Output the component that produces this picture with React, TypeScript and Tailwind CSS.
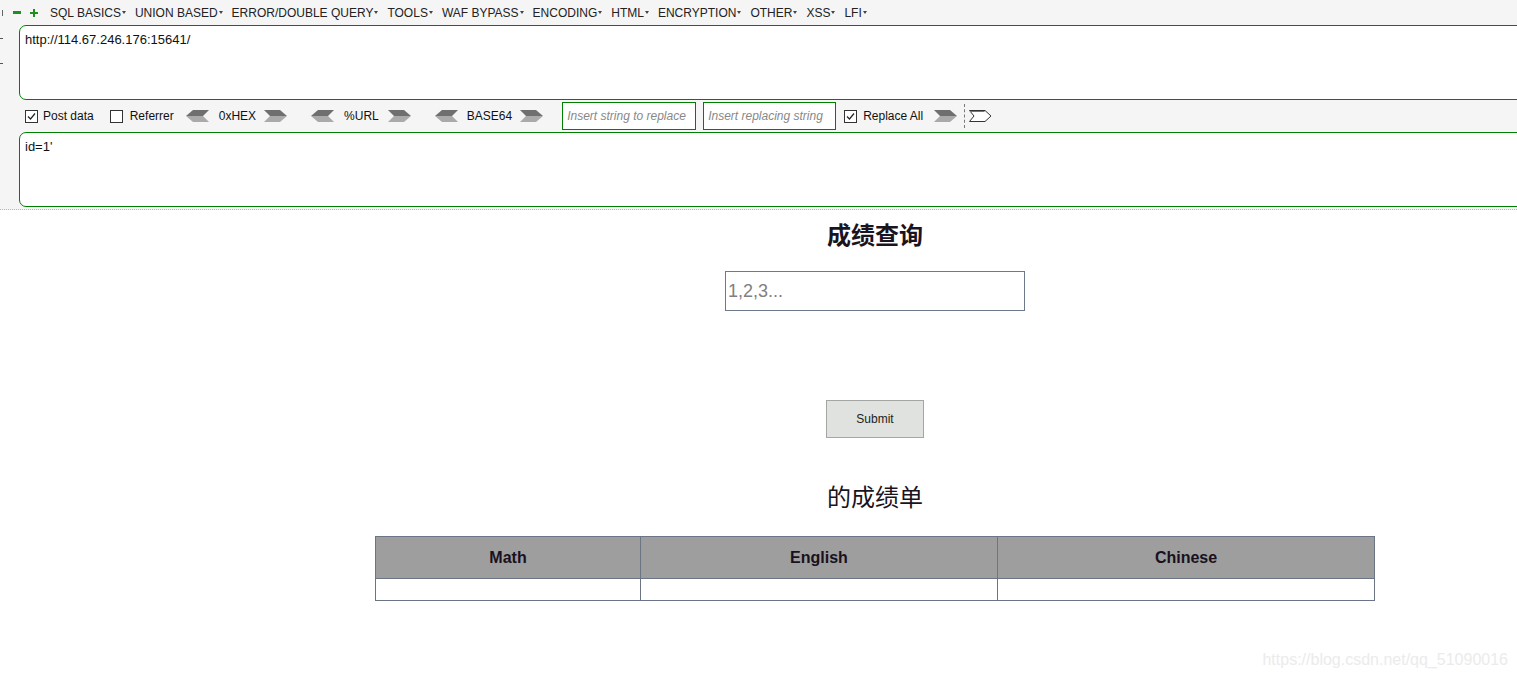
import React from 'react';

const menus = ['SQL BASICS', 'UNION BASED', 'ERROR/DOUBLE QUERY', 'TOOLS', 'WAF BYPASS', 'ENCODING', 'HTML', 'ENCRYPTION', 'OTHER', 'XSS', 'LFI'];

function LeftArrow() {
  return (
    <svg width="23" height="12" viewBox="0 0 23 12" className="shrink-0">
      <polygon points="0,6 7,0 23,0 17,6" fill="#6f6f6f" />
      <polygon points="0,6 17,6 23,12 7,12" fill="#aaaaaa" />
    </svg>
  );
}

function RightArrow() {
  return (
    <svg width="23" height="12" viewBox="0 0 23 12" className="shrink-0">
      <polygon points="0,0 16,0 23,6 6,6" fill="#6f6f6f" />
      <polygon points="6,6 23,6 16,12 0,12" fill="#aaaaaa" />
    </svg>
  );
}

function Checkbox({ checked }: { checked?: boolean }) {
  return (
    <span className="w-[13px] h-[13px] border border-[#333] bg-white flex items-center justify-center shrink-0">
      {checked && (
        <svg width="9" height="9" viewBox="0 0 9 9">
          <polyline points="1,4.5 3.5,7 8,1.5" fill="none" stroke="#222" strokeWidth="1.2" />
        </svg>
      )}
    </span>
  );
}

export default function App() {
  return (
    <div className="relative w-full h-[680px] bg-white overflow-hidden" style={{ fontFamily: '"Liberation Sans", Arial, sans-serif' }}>
      {/* HackBar panel */}
      <div className="bg-[#f5f5f5] border-b border-dotted border-[#b8b8b8] h-[210px] flex overflow-hidden">
        {/* cropped left column */}
        <div className="w-[19px] shrink-0 flex flex-col">
          <div className="h-[25px] flex items-center">
            <span className="w-[3px] h-[6px] border-r border-[#666]" />
          </div>
          <div className="mt-[13px] w-[3px] h-px bg-[#555]" />
          <div className="mt-[24px] w-[3px] h-px bg-[#555]" />
        </div>

        <div className="flex-1 flex flex-col min-w-0 -mr-[12px]">
          {/* menu bar */}
          <div className="h-[25px] flex items-center text-[12px] text-[#222] -ml-[6px]">
            <span className="w-[8px] h-[3px] bg-[#1f8f1f]" />
            <span className="ml-[9px] relative w-[8px] h-[8px]">
              <span className="absolute left-0 top-[3px] w-[8px] h-[2px] bg-[#1f8f1f]" />
              <span className="absolute left-[3px] top-0 w-[2px] h-[8px] bg-[#1f8f1f]" />
            </span>
            <div className="ml-[12px] flex items-center gap-[9px]">
              {menus.map((m) => (
                <span key={m} className="flex items-center">
                  {m}
                  <span className="ml-[1px] border-l-[2px] border-r-[2px] border-t-[3px] border-l-transparent border-r-transparent border-t-[#444]" />
                </span>
              ))}
            </div>
          </div>

          {/* url box */}
          <div className="h-[75px] bg-white border border-[#008000] rounded-l-[7px] px-[5px] pt-[4px] text-[13px] text-[#111]">
            http://114.67.246.176:15641/
          </div>

          {/* options row */}
          <div className="h-[32px] flex items-center text-[12px] text-[#111] pl-[6px]">
            <Checkbox checked />
            <span className="ml-[5px]">Post data</span>
            <span className="ml-[16px]"><Checkbox /></span>
            <span className="ml-[7px]">Referrer</span>
            <span className="ml-[12px]"><LeftArrow /></span>
            <span className="ml-[10px]">0xHEX</span>
            <span className="ml-[8px]"><RightArrow /></span>
            <span className="ml-[24px]"><LeftArrow /></span>
            <span className="ml-[10px]">%URL</span>
            <span className="ml-[9px]"><RightArrow /></span>
            <span className="ml-[24px]"><LeftArrow /></span>
            <span className="ml-[9px]">BASE64</span>
            <span className="ml-[8px]"><RightArrow /></span>
            <div className="ml-[19px] w-[134px] h-[28px] border border-[#008000] bg-white overflow-hidden whitespace-nowrap px-[4px] leading-[26px] text-[12px] italic text-[#888]">
              Insert string to replace
            </div>
            <div className="ml-[7px] w-[133px] h-[28px] border border-[#008000] bg-white overflow-hidden whitespace-nowrap px-[4px] leading-[26px] text-[12px] italic text-[#888]">
              Insert replacing string
            </div>
            <span className="ml-[8px]"><Checkbox checked /></span>
            <span className="ml-[6px]">Replace All</span>
            <span className="ml-[11px]"><RightArrow /></span>
            <span className="ml-[7px] h-[24px] border-l border-dashed border-[#777]" />
            <svg width="23" height="12" viewBox="0 0 23 12" className="ml-[4px] shrink-0">
              <polygon points="0.5,0.5 16,0.5 22,6 16,11.5 0.5,11.5 5,6" fill="#fff" stroke="#333" strokeWidth="1" />
              <line x1="1" y1="1.5" x2="15.5" y2="1.5" stroke="#777" />
            </svg>
          </div>

          {/* post data box */}
          <div className="h-[75px] bg-white border border-[#008000] rounded-l-[7px] px-[5px] pt-[4px] text-[13px] text-[#111]">
            id=1'
          </div>
        </div>
      </div>

      {/* page content */}
      <div className="ml-[375px] w-[1000px] flex flex-col items-center" style={{ fontFamily: '"Liberation Sans", "Noto Sans CJK SC", Arial, sans-serif' }}>
        <h2 className="mt-[8px] text-[24px] leading-[32px] font-bold text-[#1a1320]" style={{ fontFamily: '"Noto Sans CJK SC", sans-serif' }}>
          成绩查询
        </h2>
        <div className="mt-[21px] w-[300px] h-[40px] border border-[#6c7a89] flex items-center px-[2px] text-[18px] text-[#808080]">
          1,2,3...
        </div>
        <button className="mt-[89px] w-[98px] h-[38px] bg-[#dfe2df] border border-[#a3a6a3] text-[12px] text-[#222]">
          Submit
        </button>
        <div className="mt-[42px] text-[24px] leading-[32px] text-[#1a1320]" style={{ fontFamily: '"Noto Sans CJK SC", sans-serif' }}>
          的成绩单
        </div>
        <table className="mt-[24px] w-[1000px] border-collapse">
          <thead>
            <tr className="bg-[#9d9e9d] h-[42px]">
              <th className="w-[265px] border border-[#6b7585] text-[16px] font-bold text-[#1a1020]">Math</th>
              <th className="w-[357px] border border-[#6b7585] text-[16px] font-bold text-[#1a1020]">English</th>
              <th className="border border-[#6b7585] text-[16px] font-bold text-[#1a1020]">Chinese</th>
            </tr>
          </thead>
          <tbody>
            <tr className="h-[22px]">
              <td className="border border-[#6b7585]" />
              <td className="border border-[#6b7585]" />
              <td className="border border-[#6b7585]" />
            </tr>
          </tbody>
        </table>
      </div>

      {/* watermark */}
      <div className="absolute right-[9px] bottom-[8px] text-[16px] text-[#ebebeb]">
        https://blog.csdn.net/qq_51090016
      </div>
    </div>
  );
}
